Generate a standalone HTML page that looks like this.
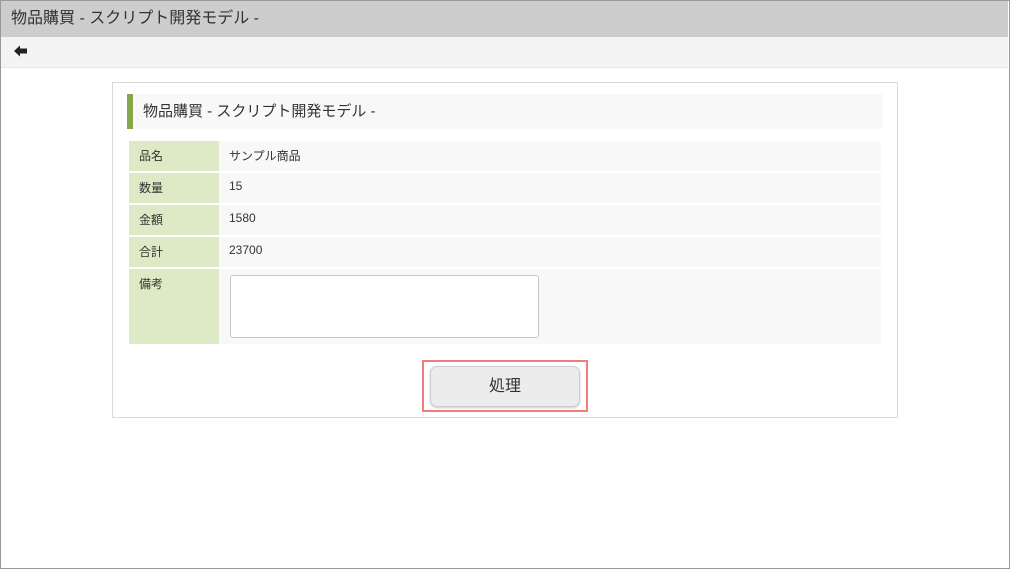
<!DOCTYPE html><html><head><meta charset="utf-8"><style>
body{margin:0;width:1010px;height:569px;overflow:hidden;font-family:"Liberation Sans","Noto Sans CJK JP",sans-serif;color:#333;background:#fff}
.frame{position:absolute;left:0;top:0;width:1008px;height:567px;border:1px solid #999}
.hd{position:absolute;left:1px;top:1px;width:1007px;height:36px;background:#cdcdcd;font-size:16px;line-height:36px;padding-left:10px;box-sizing:border-box;color:#333}
.tb{position:absolute;left:1px;top:37px;width:1007px;height:31px;background:#f4f4f4;border-bottom:1px solid #e6e6e6;box-sizing:border-box}
.box{position:absolute;left:112px;top:82px;width:786px;height:336px;border:1px solid #d9d9d9;box-sizing:border-box}
.ttl{position:absolute;left:127px;top:94px;width:756px;height:35px;background:#f8f8f8;border-left:6px solid #84a94a;box-sizing:border-box;font-size:15px;line-height:35px;padding-left:10px}
.l,.v{position:absolute;font-size:12px;box-sizing:border-box;padding-left:10px;padding-top:6px}
.l{left:129px;width:90px;background:#deeac6}
.v{left:219px;width:662px;background:#f8f8f8}
</style></head><body>
<div class="frame"></div>
<div class="hd">物品購買 - スクリプト開発モデル -</div>
<div class="tb"><svg style="position:absolute;left:13px;top:8px" width="14" height="12" viewBox="0 0 14 12"><path d="M0 6L6 0.5V3.5H13V8.5H6V11.5Z" fill="#222"/></svg></div>
<div class="box"></div>
<div class="ttl">物品購買 - スクリプト開発モデル -</div>
<div class="l" style="top:141px;height:30px">品名</div><div class="v" style="top:141px;height:30px">サンプル商品</div>
<div class="l" style="top:173px;height:30px">数量</div><div class="v" style="top:173px;height:30px">15</div>
<div class="l" style="top:205px;height:30px">金額</div><div class="v" style="top:205px;height:30px">1580</div>
<div class="l" style="top:237px;height:30px">合計</div><div class="v" style="top:237px;height:30px">23700</div>
<div class="l" style="top:269px;height:75px">備考</div><div class="v" style="top:269px;height:75px"></div>
<div style="position:absolute;left:230px;top:275px;width:309px;height:63px;border:1px solid #c8c8c8;border-radius:3px;background:#fff;box-sizing:border-box"></div>
<div style="position:absolute;left:422px;top:360px;width:166px;height:52px;border:2px solid #f07c7c;box-sizing:border-box"></div>
<div style="position:absolute;left:430px;top:366px;width:150px;height:41px;border:1px solid #ccc;border-radius:7px;background:#ececec;box-sizing:border-box;box-shadow:0 1px 2px #ccc;text-align:center;line-height:39px;font-size:16px">処理</div>
</body></html>
